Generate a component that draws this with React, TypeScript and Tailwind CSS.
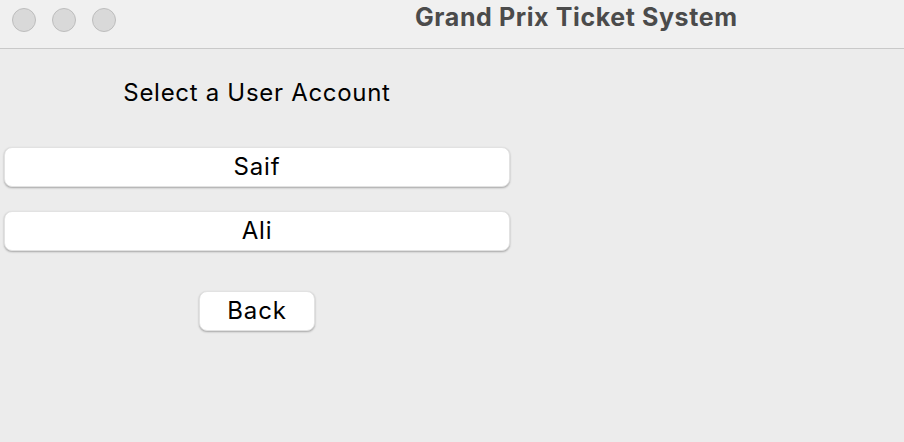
import React from 'react';

const accounts = ['Saif', 'Ali'];

export default function App() {
  return (
    <div
      className="w-[904px] h-[442px] bg-[#ececec] flex flex-col overflow-hidden"
      style={{ fontFamily: 'Inter, "Liberation Sans", Arial, sans-serif' }}
    >
      <div className="h-[49px] shrink-0 bg-[#f0f0f0] border-b border-[#c9c9c9] flex items-start">
        <div className="flex gap-4 pl-3 pt-2">
          {[0, 1, 2].map((i) => (
            <span key={i} className="w-6 h-6 rounded-full bg-[#d9d9d9] border border-[#bdbdbd]" />
          ))}
        </div>
        <div className="ml-[299px] pt-[1px] text-[25px] font-bold text-[#4b4b4b] leading-[32px] tracking-[0.6px]">
          Grand Prix Ticket System
        </div>
      </div>
      <div className="w-[514px] flex flex-col items-center px-1">
        <div className="mt-[28px] h-[32px] leading-[32px] text-[24px] text-black tracking-[0.7px]">
          Select a User Account
        </div>
        <div className="mt-[38px] w-full flex flex-col gap-[24px]">
          {accounts.map((name) => (
            <button
              key={name}
              className="h-10 w-full rounded-lg bg-white text-[24px] text-black tracking-[0.8px] shadow-[0_1px_2px_rgba(0,0,0,0.3)] border border-[#e2e2e2]"
            >
              {name}
            </button>
          ))}
        </div>
        <button className="mt-[40px] h-10 w-[116px] rounded-lg bg-white text-[24px] text-black tracking-[0.8px] shadow-[0_1px_2px_rgba(0,0,0,0.3)] border border-[#e2e2e2]">
          Back
        </button>
      </div>
    </div>
  );
}
